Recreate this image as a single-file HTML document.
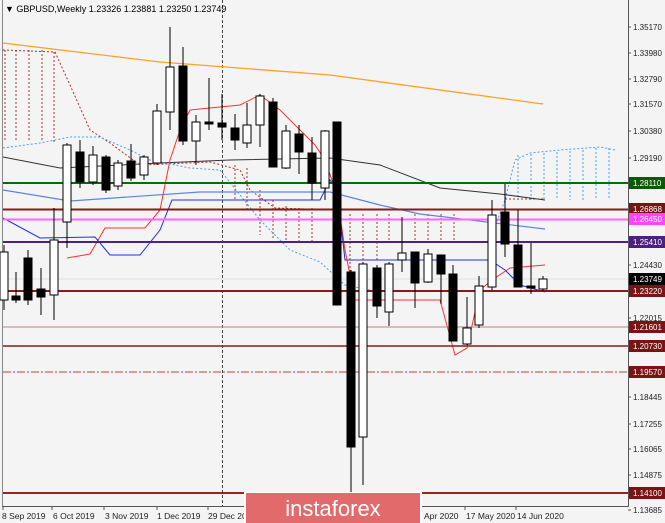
<!DOCTYPE html>
<html><head><meta charset="utf-8"><style>
body{margin:0;width:665px;height:523px;background:#f4f4f4;overflow:hidden;font-family:"Liberation Sans",sans-serif}
svg{position:absolute;left:0;top:0}
</style></head><body>
<svg width="665" height="523" viewBox="0 0 665 523" font-family="Liberation Sans, sans-serif">
<rect width="665" height="523" fill="#f4f4f4"/>
<!-- frame -->
<line x1="2.5" y1="0" x2="2.5" y2="507" stroke="#888"/>
<line x1="628.5" y1="0" x2="628.5" y2="507" stroke="#555"/>
<line x1="2" y1="506.5" x2="629" y2="506.5" stroke="#555"/>
<line x1="222.5" y1="0" x2="222.5" y2="506" stroke="#444" stroke-dasharray="3,2"/>
<!-- cloud dashed -->
<g stroke="#b03030" stroke-dasharray="2,2" fill="none" stroke-width="1">
<polyline points="3,50 55,52 70,85 90,130 110,143 140,165 165,164 210,162 240,170 250,190 275,208 340,210 490,210"/>
<line x1="5" y1="50" x2="5" y2="140"/><line x1="16" y1="50" x2="16" y2="140"/><line x1="29" y1="50" x2="29" y2="142"/><line x1="42" y1="50" x2="42" y2="142"/><line x1="54" y1="52" x2="54" y2="142"/>
<line x1="235" y1="165" x2="235" y2="200"/><line x1="247" y1="168" x2="247" y2="210"/><line x1="260" y1="190" x2="260" y2="235"/><line x1="273" y1="200" x2="273" y2="240"/><line x1="286" y1="206" x2="286" y2="240"/><line x1="299" y1="208" x2="299" y2="243"/><line x1="312" y1="208" x2="312" y2="243"/>
<line x1="350" y1="214" x2="350" y2="300"/><line x1="363" y1="214" x2="363" y2="260"/><line x1="377" y1="214" x2="377" y2="260"/><line x1="389" y1="214" x2="389" y2="240"/><line x1="415" y1="214" x2="415" y2="240"/><line x1="428" y1="214" x2="428" y2="240"/><line x1="441" y1="214" x2="441" y2="240"/><line x1="454" y1="214" x2="454" y2="240"/>
<polyline points="505,199 545,199"/>
</g>
<g stroke="#4aa0f0" stroke-dasharray="2,2" fill="none">
<polyline points="3,148 40,143 70,137 100,137 130,150 150,160 190,168 220,170 240,195 260,220 290,250 320,262 345,285 370,290"/>
<polyline points="490,240 505,200 515,160 530,153 560,150 600,147 615,150"/>
<line x1="518" y1="155" x2="518" y2="200"/><line x1="531" y1="154" x2="531" y2="200"/><line x1="544" y1="153" x2="544" y2="200"/><line x1="557" y1="152" x2="557" y2="200"/><line x1="570" y1="151" x2="570" y2="200"/><line x1="583" y1="150" x2="583" y2="200"/><line x1="596" y1="148" x2="596" y2="200"/><line x1="609" y1="148" x2="609" y2="200"/>
</g>
<!-- MAs -->
<polyline points="3,43 160,62 330,75 543,104" stroke="#ffa020" stroke-width="1.3" fill="none"/>
<polyline points="3,157 60,168 160,163 230,160 330,158 380,165 440,188 500,194 545,200" stroke="#333" fill="none"/>
<polyline points="3,190 70,201 200,192 330,192 380,205 420,214 545,229" stroke="#5a86e0" stroke-width="1.2" fill="none"/>
<!-- tenkan red -->
<polyline points="67,258 90,254 105,228 145,228 160,210 170,160 180,130 190,110 240,105 260,95 280,110 300,130 315,145 325,160 337,195 345,250 355,300 440,300 455,355 467,348 480,290 492,280 510,268 545,265" stroke="#ff3030" fill="none"/>
<!-- kijun blue -->
<polyline points="3,218 40,238 95,237 110,255 140,255 160,230 172,200 320,200 330,180 337,190 345,260 490,260 505,270 520,285 545,292" stroke="#2030e0" fill="none"/>
<!-- horizontal levels -->
<line x1="3" y1="183" x2="628" y2="183" stroke="#007000" stroke-width="2"/>
<line x1="3" y1="209.5" x2="628" y2="209.5" stroke="#8b1a1a" stroke-width="2"/>
<line x1="3" y1="219.5" x2="628" y2="219.5" stroke="#ff66ff" stroke-width="2"/>
<line x1="3" y1="242" x2="628" y2="242" stroke="#50208a" stroke-width="2"/>
<line x1="3" y1="291" x2="628" y2="291" stroke="#8b1a1a" stroke-width="2"/>
<line x1="3" y1="327" x2="628" y2="327" stroke="#c08080" stroke-width="1"/>
<line x1="3" y1="346" x2="628" y2="346" stroke="#8b1a1a" stroke-width="1.5"/>
<line x1="3" y1="372" x2="628" y2="372" stroke="#c04040" stroke-width="1" stroke-dasharray="8,2,2,2"/>
<line x1="3" y1="493" x2="628" y2="493" stroke="#a02020" stroke-width="2"/>
<line x1="3" y1="279" x2="628" y2="279" stroke="#ccc" stroke-width="0.5"/>
<!-- candles -->
<g id="c" stroke="#000" stroke-width="1">
<script>/**/</script>
</g>
<g stroke="#000" stroke-width="1">
<!-- x, bodyTop, bodyBot, hi, lo, fill -->
<line x1="4" y1="245" x2="4" y2="310"/><rect x="0" y="252" width="8" height="48" fill="#fff"/>
<line x1="16" y1="272" x2="16" y2="303"/><rect x="12" y="296" width="8" height="4" fill="#000"/>
<line x1="28" y1="250" x2="28" y2="305"/><rect x="24" y="258" width="8" height="42" fill="#000"/>
<line x1="41" y1="268" x2="41" y2="315"/><rect x="37" y="289" width="8" height="8" fill="#000"/>
<line x1="54" y1="208" x2="54" y2="320"/><rect x="50" y="240" width="8" height="55" fill="#fff"/>
<line x1="67" y1="143" x2="67" y2="248"/><rect x="63" y="145" width="8" height="77" fill="#fff"/>
<line x1="80" y1="140" x2="80" y2="188"/><rect x="76" y="152" width="8" height="30" fill="#000"/>
<line x1="93" y1="146" x2="93" y2="185"/><rect x="89" y="155" width="8" height="27" fill="#fff"/>
<line x1="106" y1="155" x2="106" y2="193"/><rect x="102" y="157" width="8" height="33" fill="#000"/>
<line x1="118" y1="160" x2="118" y2="190"/><rect x="114" y="163" width="8" height="23" fill="#fff"/>
<line x1="131" y1="144" x2="131" y2="181"/><rect x="127" y="161" width="8" height="17" fill="#000"/>
<line x1="144" y1="155" x2="144" y2="180"/><rect x="140" y="157" width="8" height="18" fill="#fff"/>
<line x1="157" y1="104" x2="157" y2="165"/><rect x="153" y="111" width="8" height="52" fill="#fff"/>
<line x1="170" y1="27" x2="170" y2="130"/><rect x="166" y="67" width="8" height="45" fill="#fff"/>
<line x1="183" y1="47" x2="183" y2="145"/><rect x="179" y="66" width="8" height="75" fill="#000"/>
<line x1="196" y1="115" x2="196" y2="165"/><rect x="192" y="122" width="8" height="19" fill="#fff"/>
<line x1="209" y1="78" x2="209" y2="130"/><rect x="205" y="122" width="8" height="2" fill="#000"/>
<line x1="222" y1="94" x2="222" y2="140"/><rect x="218" y="123" width="8" height="4" fill="#000"/>
<line x1="235" y1="114" x2="235" y2="150"/><rect x="231" y="128" width="8" height="12" fill="#000"/>
<line x1="247" y1="103" x2="247" y2="148"/><rect x="243" y="125" width="8" height="18" fill="#fff"/>
<line x1="260" y1="94" x2="260" y2="147"/><rect x="256" y="96" width="8" height="29" fill="#fff"/>
<line x1="273" y1="98" x2="273" y2="167"/><rect x="269" y="102" width="8" height="65" fill="#000"/>
<line x1="286" y1="125" x2="286" y2="169"/><rect x="282" y="131" width="8" height="37" fill="#fff"/>
<line x1="299" y1="125" x2="299" y2="174"/><rect x="295" y="134" width="8" height="18" fill="#000"/>
<line x1="312" y1="137" x2="312" y2="200"/><rect x="308" y="153" width="8" height="30" fill="#000"/>
<line x1="325" y1="130" x2="325" y2="200"/><rect x="321" y="131" width="8" height="57" fill="#fff"/>
<line x1="337" y1="122" x2="337" y2="305"/><rect x="333" y="122" width="8" height="183" fill="#000"/>
<line x1="351" y1="270" x2="351" y2="492"/><rect x="347" y="272" width="8" height="175" fill="#000"/>
<line x1="363" y1="262" x2="363" y2="485"/><rect x="359" y="264" width="8" height="173" fill="#fff"/>
<line x1="377" y1="265" x2="377" y2="318"/><rect x="373" y="268" width="8" height="38" fill="#000"/>
<line x1="389" y1="262" x2="389" y2="326"/><rect x="385" y="264" width="8" height="48" fill="#fff"/>
<line x1="402" y1="217" x2="402" y2="272"/><rect x="398" y="253" width="8" height="7" fill="#fff"/>
<line x1="415" y1="252" x2="415" y2="308"/><rect x="411" y="252" width="8" height="31" fill="#000"/>
<line x1="428" y1="249" x2="428" y2="283"/><rect x="424" y="254" width="8" height="28" fill="#fff"/>
<line x1="441" y1="255" x2="441" y2="304"/><rect x="437" y="255" width="8" height="19" fill="#000"/>
<line x1="453" y1="265" x2="453" y2="341"/><rect x="449" y="274" width="8" height="67" fill="#000"/>
<line x1="467" y1="297" x2="467" y2="345"/><rect x="463" y="328" width="8" height="16" fill="#fff"/>
<line x1="479" y1="276" x2="479" y2="328"/><rect x="475" y="286" width="8" height="39" fill="#fff"/>
<line x1="492" y1="200" x2="492" y2="290"/><rect x="488" y="215" width="8" height="72" fill="#fff"/>
<line x1="505" y1="184" x2="505" y2="257"/><rect x="501" y="212" width="8" height="32" fill="#000"/>
<line x1="518" y1="210" x2="518" y2="287"/><rect x="514" y="245" width="8" height="42" fill="#000"/>
<line x1="531" y1="243" x2="531" y2="294"/><rect x="527" y="286" width="8" height="2" fill="#000"/>
<line x1="543" y1="276" x2="543" y2="291"/><rect x="539" y="279" width="8" height="10" fill="#fff"/>
</g>
<!-- title -->
<text x="5" y="12" font-size="9" fill="#000">▼ GBPUSD,Weekly  1.23326 1.23881 1.23250 1.23749</text>
<!-- axis labels -->
<g font-size="8" fill="#222">
<text x="633" y="30">1.35170</text>
<text x="633" y="56">1.33980</text>
<text x="633" y="82">1.32790</text>
<text x="633" y="107">1.31570</text>
<text x="633" y="134">1.30380</text>
<text x="633" y="161">1.29190</text>
<text x="633" y="268">1.24430</text>
<text x="633" y="321">1.22015</text>
<text x="633" y="400">1.18445</text>
<text x="633" y="427">1.17255</text>
<text x="633" y="452">1.16065</text>
<text x="633" y="478">1.14875</text>
<text x="633" y="513">1.13685</text>
</g>
<g stroke="#555"><line x1="628" y1="27" x2="631" y2="27"/><line x1="628" y1="53" x2="631" y2="53"/><line x1="628" y1="79" x2="631" y2="79"/><line x1="628" y1="104" x2="631" y2="104"/><line x1="628" y1="131" x2="631" y2="131"/><line x1="628" y1="158" x2="631" y2="158"/><line x1="628" y1="265" x2="631" y2="265"/><line x1="628" y1="318" x2="631" y2="318"/><line x1="628" y1="397" x2="631" y2="397"/><line x1="628" y1="424" x2="631" y2="424"/><line x1="628" y1="449" x2="631" y2="449"/><line x1="628" y1="475" x2="631" y2="475"/><line x1="628" y1="510" x2="631" y2="510"/></g>
<g font-size="8" fill="#fff">
<rect x="629" y="177" width="36" height="12" fill="#0a5a0a"/><text x="633" y="186">1.28110</text>
<rect x="629" y="203" width="36" height="12" fill="#7a1414"/><text x="633" y="212">1.26868</text>
<rect x="629" y="213" width="36" height="12" fill="#ff44ff"/><text x="633" y="222">1.26450</text>
<rect x="629" y="236" width="36" height="12" fill="#4b2080"/><text x="633" y="245">1.25410</text>
<rect x="629" y="273" width="36" height="12" fill="#000"/><text x="633" y="282">1.23749</text>
<rect x="629" y="285" width="36" height="12" fill="#7a1414"/><text x="633" y="294">1.23220</text>
<rect x="629" y="321" width="36" height="12" fill="#7a1414"/><text x="633" y="330">1.21601</text>
<rect x="629" y="340" width="36" height="12" fill="#7a1414"/><text x="633" y="349">1.20730</text>
<rect x="629" y="366" width="36" height="12" fill="#7a1414"/><text x="633" y="375">1.19570</text>
<rect x="629" y="487" width="36" height="12" fill="#7a1414"/><text x="633" y="496">1.14100</text>
</g>
<!-- dates -->
<g font-size="8.5" fill="#222">
<text x="2" y="519">8 Sep 2019</text>
<text x="53" y="519">6 Oct 2019</text>
<text x="105" y="519">3 Nov 2019</text>
<text x="157" y="519">1 Dec 2019</text>
<text x="208" y="519">29 Dec 20</text>
<text x="424" y="519">Apr 2020</text>
<text x="466" y="519">17 May 2020</text>
<text x="517" y="519">14 Jun 2020</text>
</g>
<g stroke="#555"><line x1="3" y1="506" x2="3" y2="510"/><line x1="52" y1="506" x2="52" y2="510"/><line x1="104" y1="506" x2="104" y2="510"/><line x1="157" y1="506" x2="157" y2="510"/><line x1="208" y1="506" x2="208" y2="510"/><line x1="465" y1="506" x2="465" y2="510"/><line x1="516" y1="506" x2="516" y2="510"/></g>
<!-- logo -->
<rect x="244" y="492" width="178" height="31" fill="#fff"/>
<rect x="246" y="493" width="174" height="30" fill="#e36a6a"/>
<text x="333" y="516" font-size="22" fill="#fff" text-anchor="middle">instaforex</text>
</svg>
</body></html>
